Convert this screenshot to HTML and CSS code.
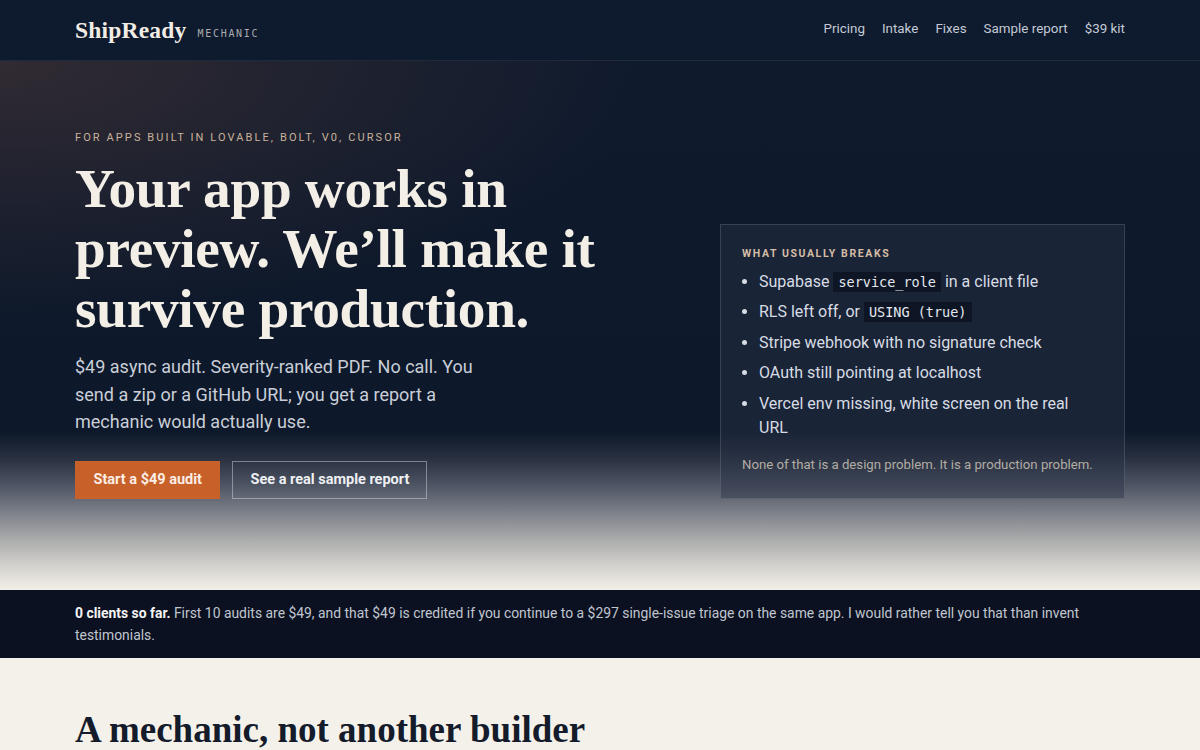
FILE: index.html
```html
<!DOCTYPE html>
<html lang="en">
<head>
<meta charset="utf-8">
<title>ShipReady Mechanic</title>
<link rel="stylesheet" href="styles.css">
</head>
<body>
<header class="site-header">
  <div class="container header-inner">
    <div class="brand">
      <span class="brand-name">ShipReady</span>
      <span class="brand-tag">MECHANIC</span>
    </div>
    <nav class="nav">
      <a href="#">Pricing</a>
      <a href="#">Intake</a>
      <a href="#">Fixes</a>
      <a href="#">Sample report</a>
      <a href="#">$39 kit</a>
    </nav>
  </div>
</header>

<section class="hero">
  <div class="container hero-grid">
    <div class="hero-copy">
      <p class="eyebrow">FOR APPS BUILT IN LOVABLE, BOLT, V0, CURSOR</p>
      <h1 class="hero-title">Your app works in preview. We’ll make it survive production.</h1>
      <p class="hero-lede">$49 async audit. Severity-ranked PDF. No call. You send a zip or a GitHub URL; you get a report a mechanic would actually use.</p>
      <div class="actions">
        <a class="btn btn-primary" href="#">Start a $49 audit</a>
        <a class="btn btn-ghost" href="#">See a real sample report</a>
      </div>
    </div>
    <aside class="breaks">
      <h2 class="breaks-title">WHAT USUALLY BREAKS</h2>
      <ul class="breaks-list">
        <li>Supabase <code>service_role</code> in a client file</li>
        <li>RLS left off, or <code>USING (true)</code></li>
        <li>Stripe webhook with no signature check</li>
        <li>OAuth still pointing at localhost</li>
        <li>Vercel env missing, white screen on the real URL</li>
      </ul>
      <p class="breaks-note">None of that is a design problem. It is a production problem.</p>
    </aside>
  </div>
</section>

<section class="band">
  <div class="container">
    <p><strong>0 clients so far.</strong> First 10 audits are $49, and that $49 is credited if you continue to a $297 single-issue triage on the same app. I would rather tell you that than invent testimonials.</p>
  </div>
</section>

<section class="about">
  <div class="container">
    <h2 class="section-title">A mechanic, not another builder</h2>
  </div>
</section>
</body>
</html>
```

FILE: styles.css
```css
* { box-sizing: border-box; }

html, body {
  margin: 0;
  padding: 0;
}

body {
  font-family: Roboto, "Noto Sans", sans-serif;
  background: #f4f1ea;
  color: #141b2b;
}

a { text-decoration: none; color: inherit; }

.container {
  width: 1050px;
  margin: 0 auto;
}

/* Header */
.site-header {
  background: #0e1a2d;
  border-bottom: 1px solid #1f2b3d;
  height: 61px;
}

.header-inner {
  height: 60px;
  display: flex;
  align-items: center;
  justify-content: space-between;
}

.brand {
  display: flex;
  align-items: center;
  gap: 11px;
}

.brand-name {
  font-family: "Liberation Serif", "DejaVu Serif", serif;
  font-weight: 700;
  font-size: 23.5px;
  color: #f1ede5;
  letter-spacing: 0.2px;
}

.brand-tag {
  margin-top: 6px;
  font-family: "DejaVu Sans Mono", "Liberation Mono", monospace;
  font-size: 10px;
  letter-spacing: 1.7px;
  color: #aaaaaf;
}

.nav {
  display: flex;
  gap: 17px;
  font-family: Roboto, "Noto Sans", sans-serif;
  font-size: 13.4px;
  color: #c3cad6;
  padding-bottom: 4px;
}

/* Hero */
.hero {
  background:
    radial-gradient(ellipse 650px 260px at 0% 0%, rgba(60, 48, 52, 0.75), rgba(60, 48, 52, 0) 100%),
    linear-gradient(180deg, #0f1a2d 0px, #0d182a 370px, #262e3e 395px, #4a5160 422px, #7a7e86 450px, #a9aaab 478px, #d4d2cd 505px, #f2efe8 529px);
  padding: 70px 0 91px;
}

.hero-grid {
  display: grid;
  grid-template-columns: 1fr 405px;
  align-items: end;
}

.eyebrow {
  margin: 0 0 15px;
  font-family: Roboto, "Noto Sans", sans-serif;
  font-size: 11px;
  letter-spacing: 2.1px;
  color: #c9b29c;
}

.hero-title {
  margin: 0 0 14px;
  font-family: "Liberation Serif", "DejaVu Serif", serif;
  font-weight: 700;
  font-size: 55.3px;
  line-height: 60px;
  color: #f3efe7;
  max-width: 560px;
  letter-spacing: -0.3px;
}

.hero-lede {
  margin: 0 0 25px;
  font-family: Roboto, "Noto Sans", sans-serif;
  font-size: 18px;
  line-height: 27.5px;
  color: #c9ced8;
  max-width: 420px;
}

.actions {
  display: flex;
  gap: 12px;
}

.btn {
  display: inline-flex;
  align-items: center;
  height: 38px;
  padding: 0 18px;
  font-family: Roboto, "Noto Sans", sans-serif;
  font-size: 14.5px;
  font-weight: 700;
}

.btn-primary {
  background: #c8602a;
  color: #fbeee4;
  padding: 0 18.5px;
}

.btn-ghost {
  border: 1px solid rgba(220, 225, 232, 0.45);
  color: #eef0f3;
  padding: 0 17px;
}

/* Breaks card */
.breaks {
  background: rgba(42, 52, 70, 0.45);
  border: 1px solid rgba(190, 200, 215, 0.18);
  padding: 22px 30px 23px 21px;
}

.breaks-title {
  margin: 0 0 10px;
  font-family: Roboto, "Noto Sans", sans-serif;
  font-size: 10.5px;
  font-weight: 700;
  letter-spacing: 1.6px;
  color: #d5bca6;
}

.breaks-list {
  margin: 0 0 15px;
  padding: 0 0 0 17px;
  font-family: Roboto, "Noto Sans", sans-serif;
  font-size: 16px;
  line-height: 24px;
  color: #d7dce4;
}

.breaks-list li {
  margin-bottom: 6.5px;
}

.breaks-list code {
  font-family: "DejaVu Sans Mono", "Liberation Mono", monospace;
  font-size: 13.5px;
  background: #0e1626;
  padding: 2px 5px;
  color: #e5e8ee;
}

.breaks-note {
  margin: 0;
  font-family: Roboto, "Noto Sans", sans-serif;
  font-size: 13.2px;
  line-height: 20px;
  color: #b3ada4;
  white-space: nowrap;
}

/* Band */
.band {
  background: #0b1120;
  padding: 12px 0;
}

.band p {
  margin: 0;
  font-family: Roboto, "Noto Sans", sans-serif;
  font-size: 13.9px;
  line-height: 22px;
  color: #c0c6d0;
}

.band strong {
  color: #f4f4f4;
}

/* About */
.about {
  padding: 50px 0 40px;
}

.section-title {
  margin: 0;
  font-family: "Liberation Serif", "DejaVu Serif", serif;
  font-weight: 700;
  font-size: 37px;
  color: #141b2b;
}
```
